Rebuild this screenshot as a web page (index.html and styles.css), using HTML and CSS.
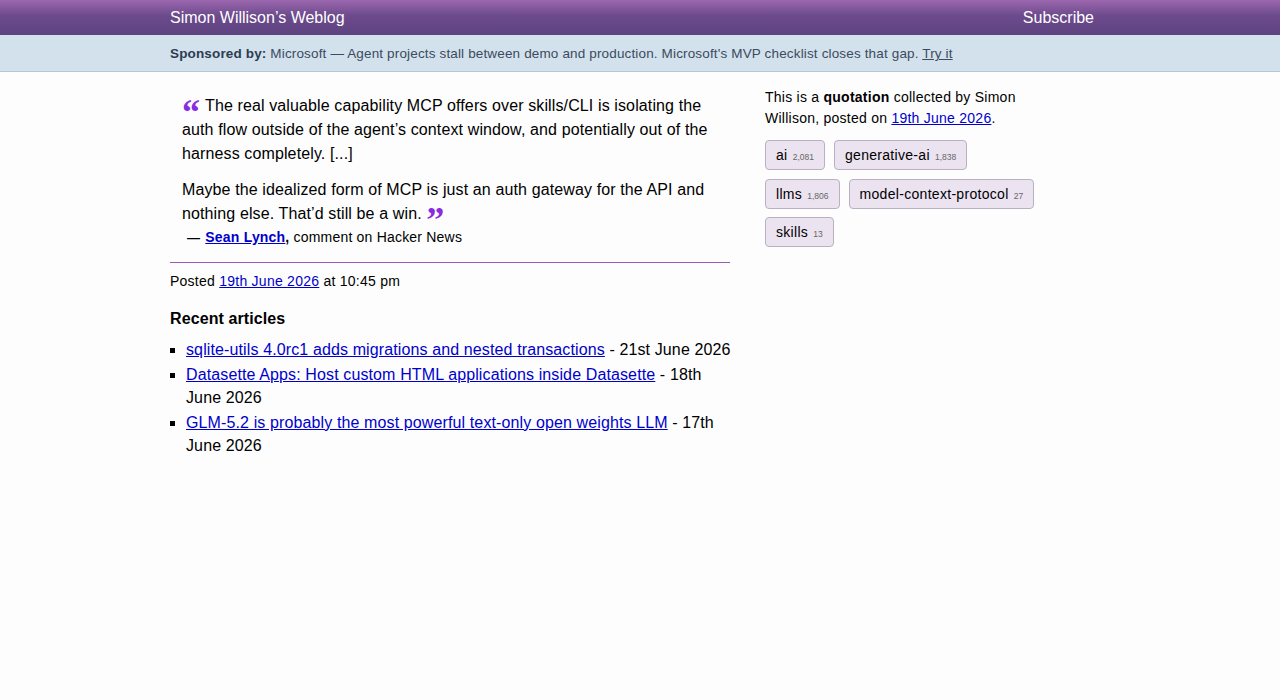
FILE: index.html
```html
<!DOCTYPE html>
<html lang="en">
<head>
<meta charset="utf-8">
<title>A quote from Sean Lynch</title>
<link rel="stylesheet" href="styles.css">
</head>
<body>
<header class="hd">
  <div class="hd-inner">
    <a class="hd-title" href="#">Simon Willison’s Weblog</a>
    <a class="hd-sub" href="#">Subscribe</a>
  </div>
</header>
<div class="sponsor">
  <div class="sponsor-inner">
    <strong>Sponsored by:</strong> Microsoft — Agent projects stall between demo and production. Microsoft's MVP checklist closes that gap. <a href="#">Try it</a>
  </div>
</div>
<div class="wrap">
  <main class="primary">
    <blockquote class="quote">
      <p><span class="oq">“</span>The real valuable capability MCP offers over skills/CLI is isolating the auth flow outside of the agent’s context window, and potentially out of the harness completely. [...]</p>
      <p>Maybe the idealized form of MCP is just an auth gateway for the API and nothing else. That’d still be a win. <span class="cq">”</span></p>
    </blockquote>
    <p class="cite"><strong class="dash">—</strong> <a href="#"><strong>Sean Lynch</strong></a><strong>,</strong> comment on Hacker News</p>
    <div class="posted">Posted <a href="#">19th June 2026</a> at 10:45 pm</div>
    <h3 class="recent-h">Recent articles</h3>
    <ul class="recent">
      <li><a href="#">sqlite-utils 4.0rc1 adds migrations and nested transactions</a> - 21st June 2026</li>
      <li><a href="#">Datasette Apps: Host custom HTML applications inside Datasette</a> - 18th June 2026</li>
      <li><a href="#">GLM-5.2 is probably the most powerful text-only open weights LLM</a> - 17th June 2026</li>
    </ul>
  </main>
  <aside class="secondary">
    <p class="meta">This is a <strong>quotation</strong> collected by Simon Willison, posted on <a href="#">19th June 2026</a>.</p>
    <div class="tags">
      <a class="tag" href="#">ai <span class="n">2,081</span></a>
      <a class="tag" href="#">generative-ai <span class="n">1,838</span></a>
      <a class="tag" href="#">llms <span class="n">1,806</span></a>
      <a class="tag" href="#">model-context-protocol <span class="n">27</span></a>
      <a class="tag" href="#">skills <span class="n">13</span></a>
    </div>
  </aside>
</div>
</body>
</html>
```
FILE: styles.css
```css
html, body {
  margin: 0;
  padding: 0;
  background: #fdfdfd;
}
body {
  font-family: "Liberation Sans", Helvetica, Arial, sans-serif;
  color: #000;
}
a { color: #0000cc; }

.hd {
  height: 35px;
  background: linear-gradient(to bottom, #9c67ae 0%, #6c4a8c 45%, #5e4380 100%);
}
.hd-inner {
  width: 924px;
  margin: 0 0 0 170px;
  height: 35px;
  display: flex;
  align-items: center;
  justify-content: space-between;
}
.hd-title, .hd-sub {
  color: #fff;
  text-decoration: none;
  font-size: 16px;
}

.sponsor {
  background: #d3e1ec;
  border-bottom: 1px solid #b3c7d9;
  height: 36px;
}
.sponsor-inner {
  margin-left: 170px;
  font-size: 13.5px;
  letter-spacing: 0.15px;
  line-height: 36px;
  padding-top: 1px;
  color: #3a4b60;
}
.sponsor-inner strong { color: #2c3c52; }
.sponsor-inner a { color: #3a4b60; }

.wrap {
  display: flex;
  margin-left: 170px;
  padding-top: 12px;
}
.primary {
  width: 560px;
}
.secondary {
  width: 280px;
  margin-left: 35px;
  padding-top: 3px;
}

.quote {
  margin: 0;
  padding: 10px 0 0 12px;
  letter-spacing: 0.12px;
}
.quote p {
  margin: 0 0 12px;
  font-size: 16px;
  line-height: 24px;
}
.quote p:last-child { margin-bottom: 0; }
.oq, .cq {
  font-family: "Liberation Serif", "Times New Roman", serif;
  font-weight: bold;
  color: #8a2be2;
  font-size: 36px;
  line-height: 0;
  vertical-align: -13px;
  letter-spacing: 0;
}
.oq { margin-right: 5px; }

.cite {
  margin: 1px 0 0 0;
  font-size: 14px;
  letter-spacing: 0.2px;
  line-height: 20px;
  padding: 0 0 14px 17px;
  border-bottom: 1px solid #9b59b6;
}
.cite .dash { font-size: 13px; margin-right: 1px; }

.posted {
  font-size: 14px;
  letter-spacing: 0.25px;
  line-height: 20px;
  margin-top: 8px;
}

.recent-h {
  font-size: 16px;
  font-weight: bold;
  margin: 18px 0 9px;
  line-height: 20px;
  letter-spacing: 0.1px;
}
.recent {
  margin: 0 -8px 0 0;
  padding-left: 16px;
  list-style: square;
  font-size: 16px;
  line-height: 23.5px;
  letter-spacing: 0.12px;
}
.recent li { margin-bottom: 1px; }

.meta {
  font-size: 14px;
  letter-spacing: 0.25px;
  line-height: 21px;
  margin: 0 0 11px;
}
.tags {
  display: flex;
  flex-wrap: wrap;
  gap: 8.5px 9px;
  width: 280px;
}
.tag {
  display: block;
  box-sizing: border-box;
  height: 30px;
  background: #ece3f0;
  border: 1px solid #bbb0c0;
  border-radius: 4px;
  color: #000;
  text-decoration: none;
  font-size: 14px;
  letter-spacing: 0.3px;
  line-height: 28px;
  padding: 0 10px;
}
.tag .n {
  font-size: 8.5px;
  line-height: 1;
  color: #666;
  margin-left: 1px;
  letter-spacing: 0;
}
```
